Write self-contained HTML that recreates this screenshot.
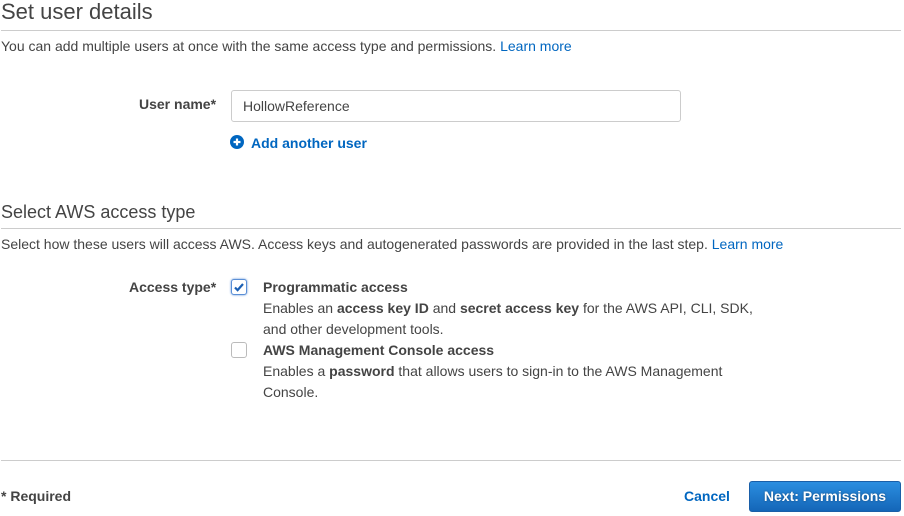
<!DOCTYPE html>
<html><head><style>
body{margin:0;width:904px;height:516px;background:#fff;font-family:"Liberation Sans",sans-serif;color:#444;position:relative;overflow:hidden}
.a{position:absolute;white-space:nowrap}
.h{font-size:20px;color:#444}
.line{position:absolute;left:1px;width:900px;height:1px;background:#ccc}
.p{font-size:14px;color:#444}
a{color:#0066c0;text-decoration:none}
.lbl{font-size:14px;font-weight:bold;color:#444}
.cb{position:absolute;width:14px;height:14px;border:1px solid #bbb;border-radius:3px;background:#fff}
</style></head><body>
<div class="a h" style="left:1px;top:-1px;font-size:22px">Set user details</div>
<div class="line" style="top:30px"></div>
<div class="a p" style="left:1px;top:38px">You can add multiple users at once with the same access type and permissions. <a>Learn more</a></div>
<div class="a lbl" style="left:139px;top:96px">User name*</div>
<div class="a" style="left:231px;top:90px;border:1px solid #ccc;border-radius:3px;font-size:14px;line-height:30px;padding-left:11px;box-sizing:border-box;width:450px;height:32px;color:#444">HollowReference</div>
<svg class="a" style="left:230px;top:135px" width="14" height="14" viewBox="0 0 14 14"><circle cx="7" cy="7" r="7" fill="#0066c0"/><path d="M7 3.5v7M3.5 7h7" stroke="#fff" stroke-width="2.2"/></svg>
<div class="a" style="left:251px;top:135px;font-size:14px;font-weight:bold;color:#0066c0">Add another user</div>
<div class="a h" style="left:1px;top:202px;font-size:18px">Select AWS access type</div>
<div class="line" style="top:228px"></div>
<div class="a p" style="left:1px;top:236px">Select how these users will access AWS. Access keys and autogenerated passwords are provided in the last step. <a>Learn more</a></div>
<div class="a lbl" style="left:129px;top:279px">Access type*</div>
<div class="cb" style="left:231px;top:279px;border-color:#5b8fd6;box-shadow:0 0 2px #5b8fd6"><svg width="14" height="14" viewBox="0 0 14 14" style="position:absolute;left:0;top:0"><path d="M3 7.5l2.6 2.6L11 4" stroke="#1a5fb4" stroke-width="2.2" fill="none"/></svg></div>
<div class="a lbl" style="left:263px;top:279px">Programmatic access</div>
<div class="a p" style="left:263px;top:298px;line-height:21px">Enables an <b>access key ID</b> and <b>secret access key</b> for the AWS API, CLI, SDK,<br>and other development tools.</div>
<div class="cb" style="left:231px;top:342px"></div>
<div class="a lbl" style="left:263px;top:342px">AWS Management Console access</div>
<div class="a p" style="left:263px;top:361px;line-height:21px">Enables a <b>password</b> that allows users to sign-in to the AWS Management<br>Console.</div>
<div class="line" style="top:460px"></div>
<div class="a lbl" style="left:1px;top:488px">* Required</div>
<div class="a" style="left:684px;top:488px;font-size:14px;font-weight:bold;color:#0066c0">Cancel</div>
<div class="a" style="left:749px;top:481px;width:152px;height:31px;box-sizing:border-box;border:1px solid #1a5fa8;border-radius:3px;background:linear-gradient(#2b8ee0,#1466b8);color:#fff;font-size:14px;font-weight:bold;text-align:center;line-height:29px;text-shadow:0 0 2px rgba(0,0,0,.4)">Next: Permissions</div>
</body></html>
